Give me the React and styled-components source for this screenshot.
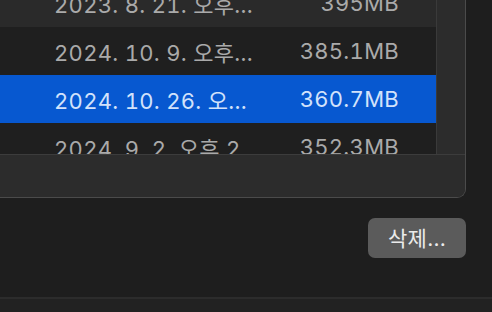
import React from "react";
import styled, { createGlobalStyle } from "styled-components";

const GlobalStyle = createGlobalStyle`
  html, body {
    margin: 0;
    padding: 0;
    background: #1e1e1e;
    overflow: hidden;
  }
  body {
    font-family: Inter, "Noto Sans CJK KR", sans-serif;
  }
`;

const Page = styled.div`
  width: 492px;
  height: 312px;
  display: flex;
  flex-direction: column;
  overflow: hidden;
`;

const Panel = styled.div`
  width: 465px;
  border-right: 1px solid #4b4b4b;
  border-bottom: 1px solid #4b4b4b;
  border-bottom-right-radius: 9px;
  background: #2b2b2b;
  overflow: hidden;
  margin-top: -21px;
`;

const Body = styled.div`
  display: flex;
  height: 175px;
`;

const List = styled.div`
  width: 436px;
  overflow: hidden;
`;

const Track = styled.div`
  flex: 1;
  border-left: 1px solid #3a3a3a;
  background: #2c2c2c;
`;

const Row = styled.div`
  height: 48px;
  display: flex;
  align-items: center;
  padding-left: 54px;
  padding-right: 37px;
  font-size: 22px;
  letter-spacing: 0.3px;
  font-variant-numeric: tabular-nums;
  color: ${(p) => (p.$selected ? "#d2e2fb" : "#aaaaaa")};
  background: ${(p) =>
    p.$selected ? "#0758d0" : p.$odd ? "#2a2a2a" : "#1f1f1f"};
`;

const DateCell = styled.span`
  flex: 1;
  white-space: nowrap;
`;

const SizeCell = styled.span`
  white-space: nowrap;
`;

const Footer = styled.div`
  height: 42px;
  border-top: 1px solid #3c3c3c;
  background: #2c2c2c;
`;

const Actions = styled.div`
  width: 466px;
  display: flex;
  justify-content: flex-end;
  padding-top: 20px;
  height: 99px;
  box-sizing: border-box;
`;

const Button = styled.button`
  width: 98px;
  height: 40px;
  border: none;
  border-radius: 7px;
  background: #5b5b5b;
  color: #ebebeb;
  font-family: Inter, "Noto Sans CJK KR", sans-serif;
  font-size: 21px;
  letter-spacing: 0.2px;
  padding: 0 0 2px;
  cursor: pointer;
`;

const BottomBar = styled.div`
  flex: 1;
  border-top: 2px solid #2c2c2c;
  background: #222222;
`;

const rows = [
  { date: "2023. 8. 21. 오후...", size: "395MB" },
  { date: "2024. 10. 9. 오후...", size: "385.1MB" },
  { date: "2024. 10. 26. 오...", size: "360.7MB", selected: true },
  { date: "2024. 9. 2. 오후 2...", size: "352.3MB" },
];

export default function App() {
  return (
    <Page>
      <GlobalStyle />
      <Panel>
        <Body>
          <List>
            {rows.map((r, i) => (
              <Row key={i} $odd={i % 2 === 0} $selected={r.selected}>
                <DateCell>{r.date}</DateCell>
                <SizeCell>{r.size}</SizeCell>
              </Row>
            ))}
          </List>
          <Track />
        </Body>
        <Footer />
      </Panel>
      <Actions>
        <Button>삭제...</Button>
      </Actions>
      <BottomBar />
    </Page>
  );
}
